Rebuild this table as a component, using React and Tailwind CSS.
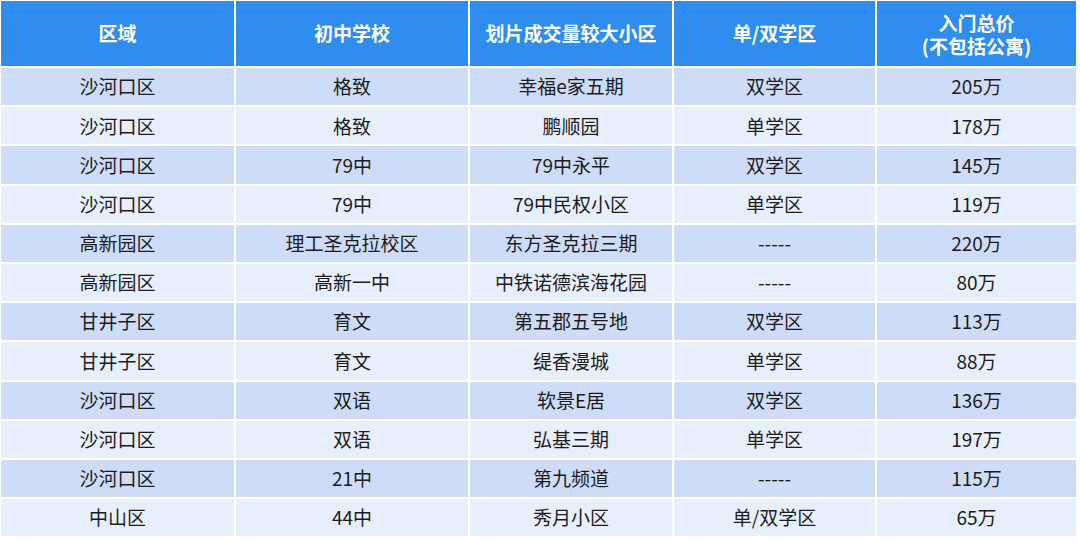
import React from "react";

const rows = [
  ["沙河口区", "格致", "幸福e家五期", "双学区", "205万"],
  ["沙河口区", "格致", "鹏顺园", "单学区", "178万"],
  ["沙河口区", "79中", "79中永平", "双学区", "145万"],
  ["沙河口区", "79中", "79中民权小区", "单学区", "119万"],
  ["高新园区", "理工圣克拉校区", "东方圣克拉三期", "-----", "220万"],
  ["高新园区", "高新一中", "中铁诺德滨海花园", "-----", "80万"],
  ["甘井子区", "育文", "第五郡五号地", "双学区", "113万"],
  ["甘井子区", "育文", "缇香漫城", "单学区", "88万"],
  ["沙河口区", "双语", "软景E居", "双学区", "136万"],
  ["沙河口区", "双语", "弘基三期", "单学区", "197万"],
  ["沙河口区", "21中", "第九频道", "-----", "115万"],
  ["中山区", "44中", "秀月小区", "单/双学区", "65万"],
];

const headers = ["区域", "初中学校", "划片成交量较大小区", "单/双学区"];

export default function App() {
  return (
    <div
      className="w-[1080px] h-[542px] bg-white pl-[1px] pt-[1px] overflow-hidden"
      style={{ fontFamily: '"Noto Sans CJK SC", "Noto Sans", sans-serif' }}
    >
      <div className="grid grid-cols-[233px_232px_202px_201px_199px] gap-x-[2px] gap-y-[2px]">
        {headers.map((h) => (
          <div
            key={h}
            className="h-[65px] bg-[#2e8def] text-white font-bold text-[19px] flex items-center justify-center"
          >
            {h}
          </div>
        ))}
        <div className="h-[65px] bg-[#2e8def] text-white font-bold text-[19px] leading-[23px] flex items-center justify-center text-center">
          <p>
            入门总价
            <br />
            (不包括公寓)
          </p>
        </div>
        {rows.map((r, i) =>
          r.map((c, j) => (
            <div
              key={i + "-" + j}
              className={
                "h-[37.2px] flex items-center justify-center text-[19px] text-[#1c1c1c] " +
                (i % 2 === 0 ? "bg-[#cedcf8]" : "bg-[#e8effc]")
              }
            >
              {c}
            </div>
          ))
        )}
      </div>
    </div>
  );
}
